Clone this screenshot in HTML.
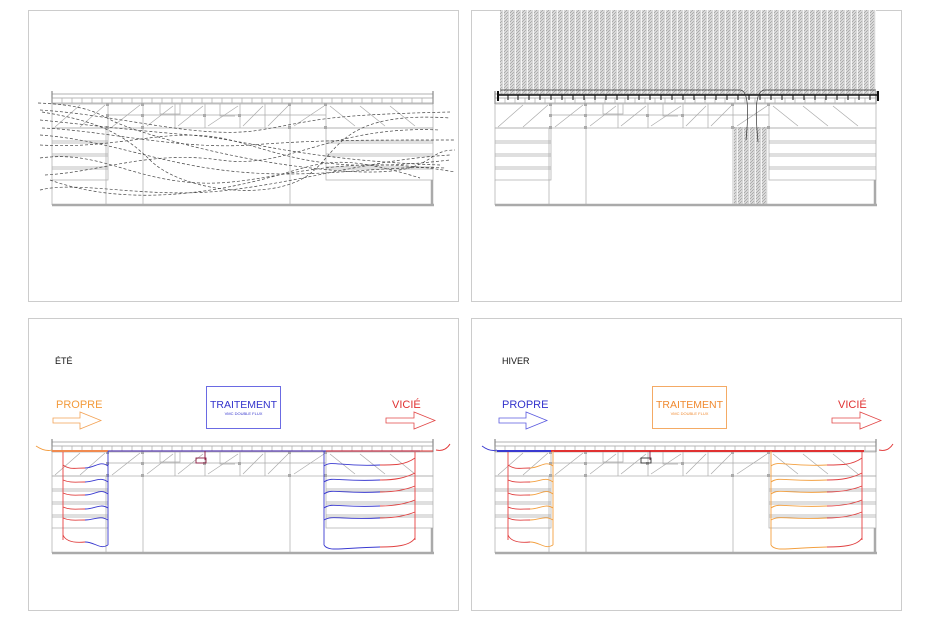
<!DOCTYPE html>
<html><head><meta charset="utf-8"><style>
html,body{margin:0;padding:0;background:#fff;}
svg{display:block;}
text{font-family:"Liberation Sans",sans-serif;}
</style></head><body>
<svg width="930" height="620" viewBox="0 0 930 620" xmlns="http://www.w3.org/2000/svg">
<defs>
<pattern id="hat" width="6" height="3" patternUnits="userSpaceOnUse">
<rect width="6" height="3" fill="#d8d8d8"/>
<rect x="0" y="0" width="1" height="1" fill="#aaa"/><rect x="2" y="1" width="1" height="1" fill="#aaa"/>
<rect x="1" y="2" width="1" height="1" fill="#b0b0b0"/><rect x="3" y="0" width="1" height="1" fill="#b0b0b0"/>
<rect x="5" y="0" width="1" height="3" fill="#f4f4f4"/>
</pattern>
<g id="bld" fill="none" stroke="#aaa" stroke-width="0.7">
<line x1="52" y1="94" x2="433" y2="94" stroke="#999"/>
<line x1="52" y1="91" x2="52" y2="104" stroke="#888" stroke-width="1.2"/>
<line x1="433" y1="91" x2="433" y2="104" stroke="#888" stroke-width="1.2"/>
<rect x="52" y="98" width="381" height="5" stroke="#999"/>
<path d="M62 98v5M72 98v5M82 98v5M92 98v5M102 98v5M112 98v5M122 98v5M132 98v5M142 98v5M152 98v5M162 98v5M172 98v5M182 98v5M192 98v5M202 98v5M212 98v5M222 98v5M232 98v5M242 98v5M252 98v5M262 98v5M272 98v5M282 98v5M292 98v5M302 98v5M312 98v5M322 98v5M332 98v5M342 98v5M352 98v5M362 98v5M372 98v5M382 98v5M392 98v5M402 98v5M412 98v5M422 98v5"/>
<rect x="52" y="104" width="381" height="24"/>
<line x1="108" y1="115" x2="326" y2="115"/>
<path d="M108 104v24M143 104v24M175 104v24M205 104v24M240 104v24M265 104v24M290 104v24M326 104v24"/>
<path d="M55 127l25-22M80 127l25-22M112 127l28-22M147 126l26-20M178 126l25-20M208 126l30-20M243 126l20-20M268 126l20-20M294 126l30-20M330 106l25 20M360 106l25 20M390 106l25 20"/>
<path d="M160 104v10h20v-10M220 104v12h15" />
<g fill="#aaa" stroke="none"><rect x="106" y="103" width="3" height="3"/><rect x="106" y="114" width="3" height="3"/><rect x="106" y="126" width="3" height="3"/><rect x="141" y="103" width="3" height="3"/><rect x="141" y="114" width="3" height="3"/><rect x="141" y="126" width="3" height="3"/><rect x="288" y="103" width="3" height="3"/><rect x="288" y="126" width="3" height="3"/><rect x="324" y="103" width="3" height="3"/><rect x="324" y="126" width="3" height="3"/><rect x="203" y="114" width="3" height="3"/><rect x="238" y="114" width="3" height="3"/></g>
<rect x="52" y="128" width="56" height="52"/>
<path d="M52 141h56M52 154h56M52 167h56M52 143h56M52 156h56M52 169h56"/>
<rect x="326" y="128" width="107" height="52"/>
<path d="M326 141h107M326 154h107M326 167h107M326 143h107M326 156h107M326 169h107"/>
<path d="M106 128v77M143 128v77M290 128v77M52 180v25"/>
<line x1="432" y1="180" x2="432" y2="205" stroke="#aaa" stroke-width="2.5"/>
<line x1="52" y1="205" x2="434" y2="205" stroke="#aaa" stroke-width="2.5"/>
</g>
</defs>

<g fill="none" stroke="#ccc" stroke-width="1">
<rect x="28.5" y="10.5" width="430" height="291"/>
<rect x="471.5" y="10.5" width="430" height="291"/>
<rect x="28.5" y="318.5" width="430" height="292"/>
<rect x="471.5" y="318.5" width="430" height="292"/>
</g>

<use href="#bld"/>
<g fill="none" stroke="#444" stroke-width="0.7" stroke-dasharray="3,2">
<path d="M38 103C90 105 100 115 115 122S220 160 330 170S420 150 455 150"/>
<path d="M40 110C120 115 200 140 260 130S320 115 450 112"/>
<path d="M42 128C100 130 180 150 250 145S350 140 455 140"/>
<path d="M40 135C110 140 160 165 240 172S380 165 445 168"/>
<path d="M40 145C120 150 170 125 230 140S320 175 450 160"/>
<path d="M40 158C100 150 130 180 200 183S330 150 455 172"/>
<path d="M45 175C100 172 150 150 220 160S330 125 440 130"/>
<path d="M40 190C80 180 150 200 230 190S370 160 450 155"/>
<path d="M40 120C90 125 130 130 190 135S300 160 440 165"/>
<path d="M42 112C90 120 120 130 150 160S260 200 300 180S330 110 450 118"/>
<path d="M50 180C120 205 200 195 260 180S330 150 420 178"/>
</g>

<rect x="500" y="10" width="376" height="84" fill="url(#hat)"/>
<rect x="734" y="127" width="34" height="78" fill="url(#hat)"/>
<use href="#bld" transform="translate(443 0)"/>
<line x1="497" y1="95" x2="879" y2="95" stroke="#111" stroke-width="1.5"/>
<path d="M498 91v10M878 91v10" stroke="#111" stroke-width="2"/>
<g stroke="#111" stroke-width="1"><path d="M508 95v5M518 95v5M529 95v5M540 95v5M551 95v5M562 95v5M573 95v5M584 95v5M595 95v5M606 95v5M617 95v5M628 95v5M639 95v5M650 95v5M661 95v5M672 95v5M683 95v5M694 95v5M705 95v5M716 95v5M727 95v5M738 95v5M749 95v5M760 95v5M771 95v5M782 95v5M793 95v5M804 95v5M815 95v5M826 95v5M837 95v5M848 95v5M859 95v5M870 95v5"/></g>
<g fill="none" stroke="#333" stroke-width="0.7">
<path d="M500 90H740C750 90 748 120 746 140"/>
<path d="M876 90H765C755 90 755 110 758 142"/>
</g>

<text x="55" y="364" font-size="9" fill="#111">ÉTÉ</text>
<text x="56" y="408" font-size="11" fill="#f39b3c">PROPRE</text>
<path d="M53 418h27v-6l21 8.5-21 8.5v-6h-27z" fill="none" stroke="#f3a255" stroke-width="0.8"/>
<rect x="206.5" y="386.5" width="74" height="42" fill="none" stroke="#5b5be0" stroke-width="0.9"/>
<text x="243.5" y="408" font-size="10.5" fill="#3333cc" text-anchor="middle">TRAITEMENT</text>
<text x="243.5" y="415" font-size="4" fill="#3333cc" text-anchor="middle">VMC DOUBLE FLUX</text>
<text x="392" y="408" font-size="11" fill="#e03232">VICIÉ</text>
<path d="M386 418h28v-6l21 8.5-21 8.5v-6h-28z" fill="none" stroke="#e24848" stroke-width="0.8"/>
<use href="#bld" transform="translate(0 348)"/>
<g fill="none" stroke-width="0.9">
<path d="M36 446Q45 452 52 450" stroke="#f39b3c"/>
<path d="M436 450Q445 452 450 444" stroke="#e03232"/>
<line x1="52" y1="451" x2="108" y2="451" stroke="#f08a50" stroke-width="2"/>
<line x1="108" y1="451" x2="420" y2="451" stroke="#5b3fb0" stroke-width="1.2"/>
<line x1="326" y1="451" x2="433" y2="451" stroke="#e03232" stroke-width="1"/>
<path d="M205 451v9" stroke="#8b1a40"/>
<rect x="196" y="458" width="10" height="5" stroke="#8b1a40"/>
<path d="M63 452V540" stroke="#e84040"/>
<path d="M108 451V545" stroke="#3a3ad0"/>
<g stroke="#e04040"><path d="M63 465C70 470 75 468 85 468"/><path d="M63 480C70 483 75 482 85 482"/><path d="M63 493C70 496 75 495 85 495"/><path d="M63 507C70 510 75 509 85 509"/><path d="M63 518C70 521 75 520 85 520"/><path d="M63 535C66 542 75 543 85 542"/></g>
<g stroke="#3a3ad0"><path d="M85 468C95 468 100 460 108 466"/><path d="M85 482C95 482 100 476 108 482"/><path d="M85 495C95 495 100 488 108 494"/><path d="M85 509C95 509 100 503 108 508"/><path d="M85 520C95 520 100 515 108 520"/><path d="M85 542C95 542 100 550 108 545"/></g>
<path d="M415 452V540" stroke="#e84040"/>
<path d="M324 451V545" stroke="#3a3ad0"/>
<g stroke="#3a3ad0"><path d="M324 466C332 460 340 467 380 465"/><path d="M324 482C332 476 340 482 380 480"/><path d="M324 494C332 488 340 494 380 492"/><path d="M324 508C332 502 340 508 380 506"/><path d="M324 520C332 515 340 520 380 518"/><path d="M324 545C328 552 340 548 380 547"/></g>
<g stroke="#e04040"><path d="M380 465C395 465 405 465 415 458"/><path d="M380 480C395 480 405 478 415 473"/><path d="M380 492C395 492 405 490 415 486"/><path d="M380 506C395 506 405 504 415 500"/><path d="M380 518C395 518 405 516 415 512"/><path d="M380 547C395 547 410 546 415 538"/></g>
</g>

<text x="502" y="364" font-size="9" fill="#111">HIVER</text>
<text x="502" y="408" font-size="11" fill="#3333cc">PROPRE</text>
<path d="M499 418h27v-6l21 8.5-21 8.5v-6h-27z" fill="none" stroke="#5b5be0" stroke-width="0.8"/>
<rect x="652.5" y="386.5" width="74" height="42" fill="none" stroke="#f3a255" stroke-width="0.9"/>
<text x="689.5" y="408" font-size="10.5" fill="#f08a30" text-anchor="middle">TRAITEMENT</text>
<text x="689.5" y="415" font-size="4" fill="#f08a30" text-anchor="middle">VMC DOUBLE FLUX</text>
<text x="838" y="408" font-size="11" fill="#e03232">VICIÉ</text>
<path d="M832 418h28v-6l21 8.5-21 8.5v-6h-28z" fill="none" stroke="#e24848" stroke-width="0.8"/>
<use href="#bld" transform="translate(443 348)"/>
<g fill="none" stroke-width="0.9">
<path d="M482 446Q490 452 497 450" stroke="#3a3ad0"/>
<path d="M879 450Q888 452 893 444" stroke="#e03232"/>
<line x1="497" y1="451" x2="551" y2="451" stroke="#3a3ad0" stroke-width="2"/>
<line x1="551" y1="451" x2="864" y2="451" stroke="#e03232" stroke-width="2"/>
<path d="M650 451v9" stroke="#8b1a40"/>
<rect x="641" y="458" width="10" height="5" stroke="#333"/>
<path d="M508 452V540" stroke="#e84040"/>
<path d="M553 451V545" stroke="#f3a040"/>
<g stroke="#e04040"><path d="M508 465C515 470 520 468 530 468"/><path d="M508 480C515 483 520 482 530 482"/><path d="M508 493C515 496 520 495 530 495"/><path d="M508 507C515 510 520 509 530 509"/><path d="M508 518C515 521 520 520 530 520"/><path d="M508 535C511 542 520 543 530 542"/></g>
<g stroke="#f3a040"><path d="M530 468C540 468 545 460 553 466"/><path d="M530 482C540 482 545 476 553 482"/><path d="M530 495C540 495 545 488 553 494"/><path d="M530 509C540 509 545 503 553 508"/><path d="M530 520C540 520 545 515 553 520"/><path d="M530 542C540 542 545 550 553 545"/></g>
<path d="M862 452V540" stroke="#e84040"/>
<path d="M771 451V545" stroke="#f3a040"/>
<g stroke="#f3a040"><path d="M771 466C779 460 787 467 827 465"/><path d="M771 482C779 476 787 482 827 480"/><path d="M771 494C779 488 787 494 827 492"/><path d="M771 508C779 502 787 508 827 506"/><path d="M771 520C779 515 787 520 827 518"/><path d="M771 545C775 552 787 548 827 547"/></g>
<g stroke="#e04040"><path d="M827 465C842 465 852 465 862 458"/><path d="M827 480C842 480 852 478 862 473"/><path d="M827 492C842 492 852 490 862 486"/><path d="M827 506C842 506 852 504 862 500"/><path d="M827 518C842 518 852 516 862 512"/><path d="M827 547C842 547 857 546 862 538"/></g>
</g>
</svg>
</body></html>
